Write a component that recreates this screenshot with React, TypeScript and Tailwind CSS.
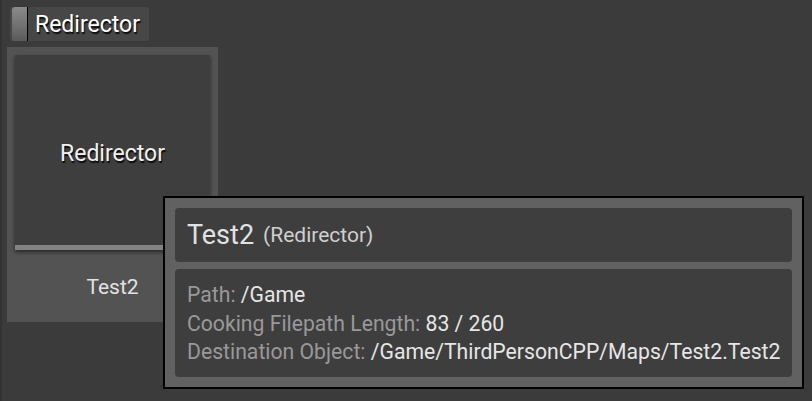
import React from "react";

export default function App() {
  const font = { fontFamily: "Roboto, 'Noto Sans', sans-serif" };
  const shadow = { textShadow: "1px 2px 1px rgba(0,0,0,0.85)" };
  return (
    <div className="relative w-[812px] h-[401px] overflow-hidden bg-[#3b3b3b]" style={font}>
      <div className="flex flex-col pl-[7px] pt-[7px] border-l-2 border-[#333333] h-full">
        {/* Header pill */}
        <div className="ml-[1px] flex h-[34px] w-[139px] items-center rounded-[3px] bg-[#474747]">
          <div className="ml-[2px] h-[34px] w-[15px] rounded-tl-[3px] rounded-bl-[2px] bg-gradient-to-b from-[#8a8a8a] via-[#737373] to-[#5a5a5a]" />
          <div className="h-[34px] w-[1px] bg-black" />
          <span className="ml-[7px] text-[23px] leading-none text-white whitespace-nowrap" style={shadow}>
            Redirector
          </span>
        </div>

        {/* Tile */}
        <div className="mt-[6px] -ml-[2px] flex h-[275px] w-[211px] flex-col items-center bg-[#535353] pt-[8px]">
          <div className="relative flex h-[195px] w-[195px] flex-col bg-[#3e3e3e] shadow-[0_2px_4px_rgba(0,0,0,0.55)]">
            <div className="flex flex-1 items-center justify-center pt-[8px]">
              <span className="text-[23px] text-[#f0f0f0]" style={shadow}>
                Redirector
              </span>
            </div>
            <div className="h-[5px] w-full bg-[#828282]" />
          </div>
          <div className="mt-[27px] text-[21px] leading-none text-[#e2e2e2]">Test2</div>
        </div>
      </div>

      {/* Tooltip */}
      <div className="absolute left-[163px] top-[196px] w-[641px] h-[193px] border-2 border-black bg-[#616161] p-[10px] flex flex-col gap-[7px]">
        <div className="flex h-[54px] shrink-0 items-center rounded-[4px] bg-[#3e3e3e] px-[12px] whitespace-nowrap">
          <span className="text-[27px] text-[#e2e2e2] leading-none">Test2</span>
          <span className="ml-[9px] text-[21px] text-[#cfcfcf] leading-none">(Redirector)</span>
        </div>
        <div className="flex flex-1 flex-col rounded-[4px] bg-[#3e3e3e] pl-[12px] pt-[12px] text-[21.2px] leading-[28.5px] whitespace-nowrap">
          <div>
            <span className="text-[#999999]">Path: </span>
            <span className="text-[#e6e6e6]">/Game</span>
          </div>
          <div>
            <span className="text-[#999999]">Cooking Filepath Length: </span>
            <span className="text-[#e6e6e6]">83 / 260</span>
          </div>
          <div>
            <span className="text-[#999999]">Destination Object: </span>
            <span className="text-[#e6e6e6]">/Game/ThirdPersonCPP/Maps/Test2.Test2</span>
          </div>
        </div>
      </div>
    </div>
  );
}
